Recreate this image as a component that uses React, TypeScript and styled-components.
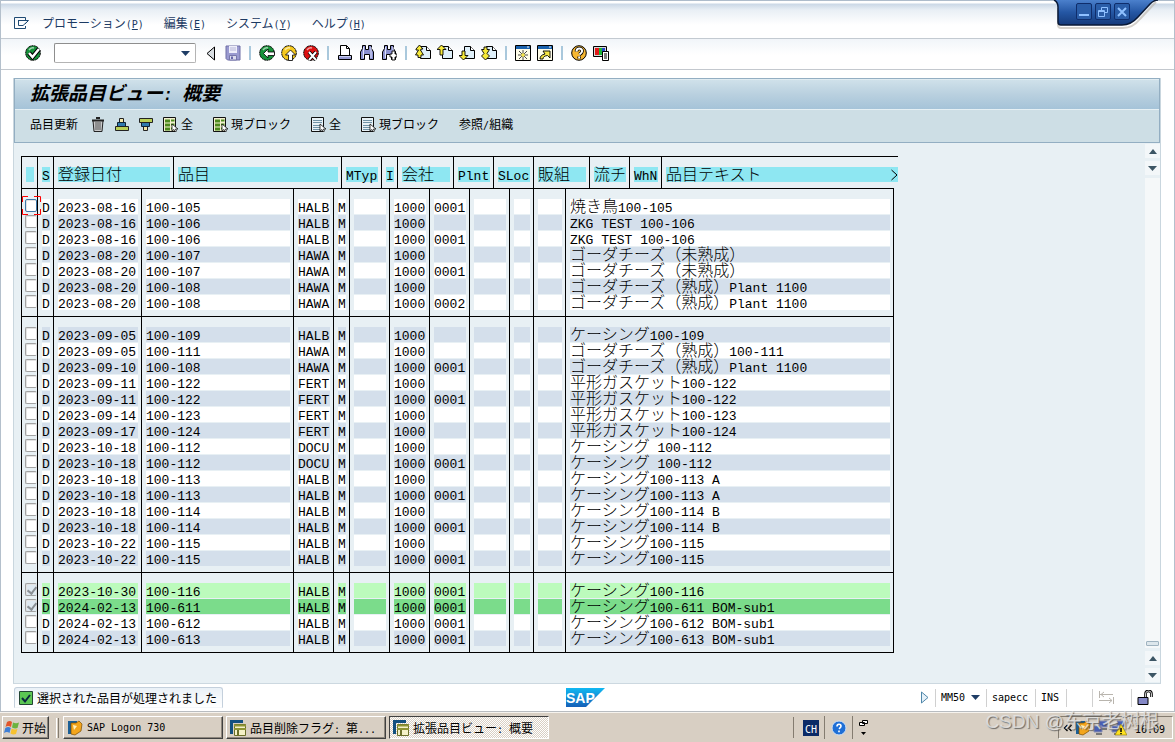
import React from 'react';
import styled, { createGlobalStyle, css } from 'styled-components';

const cjk = '"Noto Sans CJK JP", "Noto Sans CJK SC", sans-serif';
const ink = '#000';
const navy = '#1c3a63';

const GlobalStyle = createGlobalStyle`
  * { box-sizing: border-box; }
  body { margin: 0; background: #fff; color: ${ink}; font: 12px/16px ${cjk}; }
  button { appearance: none; border: 0; margin: 0; padding: 0; background: none; color: inherit; font: inherit; cursor: default; }
  svg { display: block; flex: none; }
`;

/* ---------- text with full-width and half-width runs ---------- */

const HalfWidth = styled.span<{ $large?: boolean }>`
  font-family: ${p => (p.$large ? '"Liberation Mono"' : '"DejaVu Sans Mono"')}, monospace;
  font-size: ${p => (p.$large ? 13 : 10)}px;
  line-height: 0;
  white-space: pre;
`;

function Mixed({ text, large }: { text: string; large?: boolean }) {
  const runs = text.match(/[\x20-\x7e]+|[^\x20-\x7e]+/g) || [];
  return (
    <>
      {runs.map((run, i) =>
        /^[\x20-\x7e]/.test(run) ? (
          <HalfWidth key={i} $large={large}>{run}</HalfWidth>
        ) : (
          <React.Fragment key={i}>{run}</React.Fragment>
        ),
      )}
    </>
  );
}

/* ---------- page frame ---------- */

const Screen = styled.div`
  min-height: 100vh;
  display: flex;
  flex-direction: column;
`;

const SapWindow = styled.div`
  position: relative;
  flex: 1;
  display: flex;
  flex-direction: column;
  border-left: 1px solid #b4c0cc;
  border-right: 1px solid #b4c0cc;
  border-bottom: 1px solid #b8bcc0;
  background: #fff;
`;

const MenuBar = styled.nav`
  display: flex;
  align-items: center;
  gap: 20px;
  height: 39px;
  padding: 7px 0 0 13px;
  border-top: 1px solid #aebccb;
  border-bottom: 1px solid #c3cad1;
  background: linear-gradient(#fff 0, #fff 2px, #cbd8e6 3px, #e9eff5 9px, #fff 24px);
  color: ${navy};
`;

const MenuIcon = styled.button`
  margin-right: -8px;
`;

const MenuItem = styled.button`
  white-space: nowrap;
`;

const ToolBar = styled.div`
  display: flex;
  align-items: center;
  height: 31px;
  padding: 0 0 2px 21px;
  border-bottom: 1px solid #c3c8ce;
  background: linear-gradient(#f1f5f9, #fff 16px);
`;

const ToolButton = styled.button`
  width: 22px;
  height: 22px;
  display: flex;
  align-items: center;
  justify-content: center;
`;

const ToolSeparator = styled.span`
  width: 2px;
  height: 14px;
  margin: 0 5px;
  background: #a9c8dc;
`;

const CommandField = styled.label`
  display: flex;
  align-items: center;
  width: 142px;
  height: 20px;
  margin: 0 4px 0 10px;
  padding-right: 5px;
  border: 1px solid #b4b4b4;
  border-top-color: #8e8e8e;
  border-left-color: #8e8e8e;
  border-radius: 2px;
  background: #fff;
`;

const CommandInput = styled.input`
  flex: 1;
  min-width: 0;
  height: 16px;
  border: 0;
  outline: 0;
  background: transparent;
`;

const WorkArea = styled.main`
  flex: 1;
  display: flex;
  flex-direction: column;
  margin: 8px 13px 0 12px;
  border-left: 1px solid #c9d6de;
  border-right: 1px solid #c9d6de;
  border-bottom: 1px solid #ccd8e0;
  background: #e8f0f4;
`;

const TitleBand = styled.header`
  border: 1px solid #93aec2;
  background: #cddee5;
`;

const Title = styled.h1`
  height: 31px;
  margin: 0;
  padding-left: 15px;
  border-top: 1px solid #e0ecf2;
  border-bottom: 1px solid #e6f0f4;
  background: linear-gradient(#cfe1ea, #b9d0df 50%, #a5c3d8);
  font-size: 19px;
  line-height: 24px;
  font-weight: 700;
  font-style: italic;
`;

const TitleHalf = styled.span`
  font: italic 700 16px/0 "Liberation Mono", monospace;
  white-space: pre;
`;

const AppBar = styled.div`
  display: flex;
  align-items: center;
  gap: 20px;
  height: 32px;
  padding: 0 0 4px 15px;
`;

const AppTools = styled.div`
  display: flex;
  align-items: center;
  margin: 0 -15px 0 -12px;
`;

const AppIconButton = styled.button`
  width: 24px;
  display: flex;
  justify-content: center;
`;

const AppButton = styled.button`
  display: flex;
  align-items: center;
  gap: 3px;
  white-space: nowrap;
`;

const Content = styled.div`
  flex: 1;
  display: flex;
  justify-content: space-between;
`;

/* ---------- item grid ---------- */

const Grid = styled.table`
  display: block;
  margin: 13px 0 30px 7px;
`;

const HeadGroup = styled.thead`
  display: block;
  width: 877px;
  border-top: 1px solid ${ink};
`;

const BodyGroup = styled.tbody`
  display: block;
  width: 873px;
  border-top: 1px solid ${ink};
  &:last-child { border-bottom: 1px solid ${ink}; }
`;

const cell = css`
  display: block;
  padding: 0 3px 0 4px;
  border-left: 1px solid ${ink};
  font-weight: 400;
  text-align: left;
`;

const HeadRow = styled.tr`
  display: grid;
  grid-template-columns: 16px 16px 120px 168px 40px 16px 56px 40px 40px 56px 40px 32px 237px;
`;

const HeadCell = styled.th`
  ${cell}
  padding-top: 10px;
  padding-bottom: 5px;
  &:last-child { padding-right: 0; }
`;

const BodyRow = styled.tr`
  display: grid;
  grid-template-columns: 16px 16px 88px 152px 40px 16px 40px 40px 40px 40px 24px 32px 329px;
`;

const BodyCell = styled.td`
  ${cell}
  &:last-child { border-right: 1px solid ${ink}; padding-right: 3px; }
  ${BodyRow}:first-child & { padding-top: 10px; }
  ${BodyRow}:last-child & { padding-bottom: 5px; }
`;

type Tone = 'head' | 'white' | 'blue' | 'light' | 'green';
const tones: Record<Tone, string> = {
  head: '#8ee7f2',
  white: '#ffffff',
  blue: '#d4dfeb',
  light: '#bcfbbc',
  green: '#7bdc8b',
};

const Field = styled.span<{ $tone: Tone }>`
  display: flow-root;
  height: 15px;
  margin-bottom: 1px;
  background: ${p => tones[p.$tone]};
  font-size: 16px;
  font-weight: 300;
  line-height: 12px;
  white-space: pre;
`;

const HeadField = styled(Field)`
  display: flex;
  justify-content: space-between;
`;

const CheckHolder = styled.span`
  position: relative;
  display: block;
  height: 16px;
`;

const RowCheck = styled.input`
  appearance: none;
  display: block;
  position: relative;
  width: 12px;
  height: 13px;
  margin: 0 0 0 -1px;
  border: 1px solid #a2a2a2;
  border-right-color: #dcdcdc;
  border-radius: 2px;
  background: #fff;
  box-shadow: inset 1px 1px 0 #e4e4e4;
  &:checked { background: #dfe9f1; }
  &:checked::after {
    content: '';
    position: absolute;
    left: 3px;
    top: 1px;
    width: 4px;
    height: 7px;
    border: solid #8a8f94;
    border-width: 0 2px 2px 0;
    transform: rotate(38deg);
  }
  &[data-current='true'] { border-color: #3d78a8; }
`;

const CursorFrame = styled.svg`
  position: absolute;
  left: -4px;
  top: -3px;
`;

const ScrollBar = styled.div`
  width: 15px;
  margin: 1px 0;
  display: flex;
  flex-direction: column;
  gap: 3px;
`;

const ScrollButton = styled.button`
  height: 14px;
  display: flex;
  align-items: center;
  justify-content: center;
  background: #f3f7f9;
`;

const ScrollTrack = styled.div`
  flex: 1;
  display: flex;
  flex-direction: column;
  justify-content: flex-end;
  padding-bottom: 2px;
  background: #f5f8f9;
`;

const ScrollThumb = styled.div`
  height: 5px;
  margin: 0 1px;
  border: 1px solid #9fb3c0;
  border-radius: 1px;
  background: #dde7ec;
`;

/* ---------- status line ---------- */

const StatusBar = styled.footer`
  display: grid;
  grid-template-columns: 1fr auto 1fr;
  align-items: center;
  height: 27px;
  padding: 0 18px 0 13px;
`;

const StatusMessage = styled.div`
  justify-self: start;
  display: flex;
  align-items: center;
  gap: 4px;
  height: 21px;
  padding: 0 5px 0 4px;
  border: 1px solid #c4d0dc;
  border-bottom-color: #f4f7fa;
  border-radius: 3px 3px 0 0;
  background: linear-gradient(#eaf1f7, #fff);
`;

const StatusFields = styled.div`
  justify-self: end;
  display: flex;
  align-items: center;
  height: 18px;
`;

const StatusField = styled.button<{ $width: number }>`
  display: flex;
  align-items: center;
  gap: 6px;
  height: 18px;
  width: ${p => p.$width}px;
  padding-left: 5px;
  border-left: 1px solid #d0d0d0;
`;

/* ---------- window caption buttons ---------- */

const Caption = styled.div`
  position: absolute;
  top: 0;
  right: 15px;
  width: 106px;
  height: 30px;
`;

const CaptionShape = styled.svg`
  position: absolute;
  left: 0;
  top: 0;
`;

const CaptionButtons = styled.div`
  position: relative;
  display: flex;
  gap: 3px;
  padding: 3px 0 0 23px;
`;

const CaptionButton = styled.button`
  width: 16px;
  height: 17px;
  display: flex;
  align-items: center;
  justify-content: center;
  border: 1px solid #0f2d6b;
  border-radius: 2px;
  background: #2a5da8;
`;

/* ---------- desktop task bar ---------- */

const TaskBar = styled.div`
  position: relative;
  display: flex;
  align-items: center;
  height: 30px;
  padding: 0 2px;
  border-top: 1px solid #f6f3ee;
  background: #d8cfc3;
`;

const TaskButton = styled.button<{ $pressed?: boolean }>`
  flex: 0 1 160px;
  min-width: 0;
  height: 23px;
  display: flex;
  align-items: center;
  gap: 4px;
  margin-right: 3px;
  padding: 0 3px;
  border: 1px solid;
  white-space: nowrap;
  ${p =>
    p.$pressed
      ? css`
          border-color: #404040 #fff #fff #404040;
          background: repeating-conic-gradient(#fff 0 25%, #d8cfc3 0 50%) 0 0 / 2px 2px;
        `
      : css`
          border-color: #fff #404040 #404040 #fff;
          box-shadow: inset -1px -1px 0 #8d867c;
        `}
`;

const StartButton = styled(TaskButton)`
  flex: none;
  width: 47px;
  gap: 2px;
  padding: 0 0 0 1px;
  font-family: "Noto Sans CJK SC", sans-serif;
`;

const Grip = styled.span`
  width: 3px;
  height: 20px;
  margin: 0 4px;
  border-left: 1px solid #fff;
  border-right: 1px solid #847c70;
`;

const Spacer = styled.span`
  flex: 1;
`;

const LangBar = styled.div`
  display: flex;
  align-items: center;
  gap: 5px;
  margin-right: 190px;
  border-left: 1px solid #847c70;
  padding-left: 9px;
  height: 21px;
`;

const LangMark = styled.button`
  width: 16px;
  height: 16px;
  background: #0b2a66;
  color: #fff;
  line-height: 16px;
  text-align: center;
`;

const LangSlot = styled.button`
  height: 23px;
  display: flex;
  align-items: center;
  padding-left: 6px;
  border-left: 1px solid #847c70;
`;

const Tray = styled.div`
  display: flex;
  align-items: center;
  gap: 2px;
  width: 115px;
  height: 23px;
  padding: 0 7px 0 4px;
  border: 1px solid;
  border-color: #847c70 #fff #fff #847c70;
`;

const Clock = styled.time`
  margin-left: auto;
`;

const Watermark = styled.span`
  position: absolute;
  right: 16px;
  top: -4px;
  color: rgba(232, 232, 232, 0.8);
  font: 19px/26px "Liberation Sans", "Noto Sans CJK SC", sans-serif;
  text-shadow: 1px 1px 1px rgba(80, 80, 80, 0.8);
  white-space: nowrap;
`;

/* ---------- drawings ---------- */

const Svg = ({ w = 16, h = 16, children }: { w?: number; h?: number; children: React.ReactNode }) => (
  <svg width={w} height={h} viewBox={`0 0 ${w} ${h}`} aria-hidden="true">{children}</svg>
);

const Down = ({ fill = '#1f3d66' }: { fill?: string }) => (
  <Svg w={9} h={5}><path d="M0 0h9L4.500 5z" fill={fill} /></Svg>
);
const Up = () => <Svg w={8} h={5}><path d="M0 5h8L4 0z" fill="#3c5564" /></Svg>;

const MenuGlyph = () => (
  <Svg w={16} h={13}>
    <g fill="none" stroke="#1f4a73">
      <path d="M11.500 3V.5H.5v11h11V9" />
      <path d="M4 3.500h10.500L11 7M4.500 3.500v5H9L14 4" />
    </g>
  </Svg>
);

const Ball = ({ fill, children }: { fill: string; children: React.ReactNode }) => (
  <Svg>
    <circle cx="8" cy="8" r="7.300" fill={fill} stroke="#000" strokeDasharray="2 .5" />
    <path d="M4 5q2-3 5-2" stroke="#fff" strokeOpacity=".6" strokeWidth="1.500" fill="none" />
    {children}
  </Svg>
);
const CheckBall = () => (
  <Ball fill="#16923a"><path d="M4 8l3.500 4L14 4" fill="none" stroke="#000" strokeWidth="4.500" /><path d="M4 8l3.500 4L14 4" fill="none" stroke="#fff" strokeWidth="2.500" /></Ball>
);
const BackBall = () => (
  <Ball fill="#16923a"><path d="M4.500 8.500L9 4v3h6.500v3.500H9V13z" fill="#fff" stroke="#000" strokeWidth=".8" /></Ball>
);
const ExitBall = () => (
  <Ball fill="#f5c81c"><path d="M9.500 5l5 5h-3v5.500h-4V10h-3z" fill="#fff" stroke="#000" strokeWidth=".8" /></Ball>
);
const CancelBall = () => (
  <Ball fill="#dd1111"><path d="M6 7l7 8M13 7l-7 8" stroke="#000" strokeWidth="3.500" /><path d="M6 7l7 8M13 7l-7 8" stroke="#fff" strokeWidth="2" /></Ball>
);
const HelpBall = () => (
  <Svg>
    <circle cx="8" cy="8" r="7.300" fill="#f7b731" stroke="#000" />
    <path d="M5.500 6.500q0-3 2.800-3t2.800 2.700q0 1.500-2.700 3.300M8.200 11.500v2" fill="none" stroke="#000" strokeWidth="3.600" />
    <path d="M5.500 6.500q0-3 2.800-3t2.800 2.700q0 1.500-2.700 3.300M8.200 11.500v2" fill="none" stroke="#fff" strokeWidth="2" />
  </Svg>
);
const LeftTriangle = () => (
  <Svg w={10} h={15}><path d="M8.500 1v13L1 7.500z" fill="#d9dee2" stroke="#000" /></Svg>
);
const Floppy = () => (
  <Svg>
    <path d="M1 1h14v14H2.500L1 13.500z" fill="#9a9ad0" stroke="#6f6fa6" />
    <path d="M4 1h8v7H4z" fill="#eeeefa" /><path d="M5 3h6M5 5h6" stroke="#b7b7d8" />
    <path d="M4.500 10.500h7V15h-7z" fill="#dcdcee" stroke="#77a" /><path d="M6 11.500h2V14H6z" fill="#66a" />
  </Svg>
);
const Printer = () => (
  <Svg>
    <path d="M3.500 10V.5h6l3 3V10" fill="#fff" stroke="#000" /><path d="M9.500 .5v3h3" fill="none" stroke="#000" />
    <path d="M1.500 10.500h13v4h-13z" fill="#c8cdf0" stroke="#000" strokeLinejoin="round" /><path d="M2 13h12" stroke="#6a6ab8" />
  </Svg>
);
const Binoculars = ({ next }: { next?: boolean }) => (
  <Svg>
    <path d="M3.500.5v3L1.500 7v7.500h4v-5h5v5h4V7l-2-3.500v-3h-3v4h-3v-4z" fill="#8a90d0" stroke="#000" />
    <path d="M4.500 2v11M12 2v11" stroke="#dfe2fa" />
    {next && <path d="M11 6h3v3h2v3h-2v3h-3v-3H9V9h2z" fill="#fff" stroke="#000" strokeWidth=".9" />}
  </Svg>
);
const PageArrow = ({ kind }: { kind: 'first' | 'prev' | 'next' | 'last' }) => {
  const arrow = {
    first: 'M4.500 0L8 4H6v1h-.5L8.500 10H6v2.500H3V10H.5l3-5H1V4z',
    prev: 'M4.500 0L9 4.500H6V10H3V4.500H0z',
    next: 'M3 6h3v4.500h3L4.500 15 0 10.500h3z',
    last: 'M3 2h3v2.500h2.500L6 8.500l2.500 2.500L4.500 15 .5 11 3 8.500.5 4.500H3z',
  }[kind];
  return (
    <Svg>
      <path d="M5.500 1.500h6l4 4v8h-10z" fill="#dff0fa" stroke="#000" />
      <path d="M11.500 1.500v4h4" fill="#fff" stroke="#000" />
      <path d={arrow} fill="#f7ea3a" stroke="#000" strokeWidth=".9" />
    </Svg>
  );
};
const SessionIcon = ({ link }: { link?: boolean }) => (
  <Svg>
    <path d="M.5.5h15v15H.5z" fill="#fffde9" stroke="#000" />
    <path d="M1 1h14v3H1z" fill="#1a62ae" /><path d="M12 2h2" stroke="#fff" />
    {link ? (
      <path d="M3 14q0-4 5-5L6 6h7v7l-2.500-2.500Q6 11 6 14z" fill="#f6e544" stroke="#000" strokeWidth=".9" />
    ) : (
      <path d="M8 5v10M3 10h10M4 6l8 8M12 6l-8 8" stroke="#333" strokeWidth=".9" />
    )}
    {!link && <circle cx="8" cy="10" r="1.800" fill="#f6e544" />}
  </Svg>
);
const LayoutIcon = () => (
  <Svg>
    <path d="M.5 1.500h13v10H.5z" fill="#d9d9d9" stroke="#000" />
    <path d="M2 3h4v7H2z" fill="#e01b1b" /><path d="M6 3h3v7H6z" fill="#19b53a" /><path d="M9 3h3v7H9z" fill="#2448c8" />
    <path d="M9.500 6.500h6v9h-6z" fill="#fff" stroke="#000" /><path d="M11 9h3M11 11h3M11 13h3" stroke="#000" />
  </Svg>
);
const Trash = () => (
  <Svg w={14} h={15}>
    <path d="M2 3.500h10l-1 11H3z" fill="#c9cacb" stroke="#222" /><path d="M5 5v8M7 5v8M9 5v8" stroke="#555" />
    <path d="M1 3.500h12M5 1h4" stroke="#222" strokeWidth="2" />
  </Svg>
);
const Sort = ({ down }: { down?: boolean }) => (
  <Svg w={16} h={15}>
    <g transform={down ? 'matrix(1 0 0 -1 0 15)' : undefined}>
      <path d="M5.500 1.500h4v4h-4z" fill="#f5e7a8" stroke="#222" />
      <path d="M3.500 5.500h8v4h-8z" fill="#2f79ad" stroke="#123" />
      <path d="M1.500 9.500h13v4h-13z" fill="#b9cf55" stroke="#222" />
    </g>
  </Svg>
);
const Pick = ({ on }: { on?: boolean }) => (
  <Svg w={15} h={15}>
    <path d="M.5.5h12v14H.5z" fill={on ? '#f3f0d0' : '#e7f1f6'} stroke="#111" />
    {on ? (
      <><path d="M2 2.500h5v3H2zM2 6.500h5v3H2zM2 10.500h5v3H2z" fill="#4d8a1d" /><path d="M8 3.500h3.500M8 7.500h3.500M8 11.500h3" stroke="#4d8a1d" strokeWidth="2" /></>
    ) : (
      <path d="M2 3.500h9M2 5.500h9M2 8.500h7M2 10.500h7M2 12.500h7" stroke="#6f94a8" />
    )}
    <path d="M9 7v7l2-1.500 1.500 2.500 1-1-1-2h2.500z" fill="#fff" stroke="#111" strokeWidth=".8" />
  </Svg>
);
const SapLogo = () => (
  <svg width="39" height="19" viewBox="0 0 39 19" role="img" aria-label="SAP">
    <defs>
      <linearGradient id="sapBlue" x1="0" y1="0" x2="0" y2="1">
        <stop offset="0" stopColor="#10b8f2" /><stop offset="1" stopColor="#1560b8" />
      </linearGradient>
    </defs>
    <path d="M0 0h39L20 19H0z" fill="url(#sapBlue)" />
    <text x="0" y="15" fill="#fff" fontFamily="Liberation Sans, sans-serif" fontWeight="700" fontSize="14">SAP</text>
  </svg>
);
const OkIcon = () => (
  <Svg w={14} h={14}><path d="M.5.5h13v13H.5z" fill="#5bc653" stroke="#243" /><path d="M3 7l3 3.500L11 4" fill="none" stroke="#0b2740" strokeWidth="2" /></Svg>
);
const PlayIcon = () => <Svg w={9} h={13}><path d="M1.500 1v11L8 6.500z" fill="#e4f0f8" stroke="#4f87aa" /></Svg>;
const SwapIcon = () => (
  <Svg w={17} h={13}><path d="M1.500 0v7M2 3.500h13M6 1L3 3.500 6 6M15.500 6v7M1 9.500h13M11 7l3 2.500-3 2.500" fill="none" stroke="#b9b5ae" /></Svg>
);
const LockIcon = () => (
  <Svg w={16} h={15}>
    <path d="M8.500 7V4q0-3 3-3t3 3v3" fill="none" stroke="#000" strokeWidth="2.600" /><path d="M8.500 7V4q0-3 3-3t3 3v3" fill="none" stroke="#fff" strokeWidth=".8" />
    <path d="M1 7.500h10v7H1z" fill="#8488c6" stroke="#000" />
  </Svg>
);
const WindowsFlag = () => (
  <Svg w={16} h={15}>
    <path d="M3 2q3-2 5 0L7 7Q4 5 1.500 7z" fill="#e2562b" /><path d="M9 2.500q3 1.500 6 0L13.500 8Q11 9 8 7.500z" fill="#6cb33f" />
    <path d="M1.300 8q3-2 5.500 0l-1.300 5Q3 11 0 13z" fill="#3f7fd6" /><path d="M7.700 8.500q3 1.500 5.700.5L12 14q-3 1-5.500-.5z" fill="#f7c22f" />
  </Svg>
);
const LogonIcon = () => (
  <Svg>
    <path d="M1 1h9v13H1z" fill="#1b5f96" /><path d="M4 3h5l3-2 3 3-1 7-6 4-4-1z" fill="#f3a51c" stroke="#7a4a00" strokeWidth=".7" /><path d="M6 5l4 1-3 4z" fill="#fff2c0" />
  </Svg>
);
const SapWinIcon = () => (
  <Svg>
    <path d="M0 0h13v3H3v11H0z" fill="#12507f" /><path d="M4.500 4.500h11v11h-11z" fill="#f4f1c8" stroke="#6b6f2a" />
    <path d="M4 5.500h12M4 9h12" stroke="#8d9433" strokeWidth="2" /><path d="M8 10v5" stroke="#6b6f2a" strokeWidth="2" />
  </Svg>
);
const InfoBall = () => (
  <Svg><circle cx="8" cy="8" r="7" fill="#1f6fd6" stroke="#cfe1f6" /><path d="M6 6.500q0-2.300 2-2.300t2 2q0 1-2 2.600M8 10.500v1.700" fill="none" stroke="#fff" strokeWidth="1.600" /></Svg>
);
const LangOptions = () => (
  <Svg w={9} h={18}><path d="M3.500 1.500h5v3h-5zM.5 3.500h5v3h-5z" fill="#fff" stroke="#000" /><path d="M2 13h5l-2.500 3z" /></Svg>
);
const NetIcon = ({ warn }: { warn?: boolean }) => (
  <Svg>
    <path d="M6 1h8v6H6zM1 6h8v6H1z" fill="#4a5fb4" stroke="#8a90b0" /><path d="M3 14h6M9 9h5" stroke="#777" strokeWidth="2" />
    {warn && <><path d="M10 4l6 11H4z" fill="#ffe21f" stroke="#8a7300" strokeWidth=".6" /><path d="M10 8v4M10 13v1.300" stroke="#000" strokeWidth="1.500" /></>}
  </Svg>
);
const Chevrons = () => <Svg w={10} h={8}><path d="M4.500 1L1.500 4l3 3M8.500 1l-3 3 3 3" fill="none" stroke="#000" strokeWidth="1.300" /></Svg>;

/* ---------- data ---------- */

const menus = [['プロモーション', 'P'], ['編集', 'E'], ['システム', 'Y'], ['ヘルプ', 'H']];

const columns = ['', 'S', '登録日付', '品目', 'MTyp', 'I', '会社', 'Plnt', 'SLoc', '販組', '流チ', 'WhN', '品目テキスト'];

type Item = [date: string, material: string, type: string, sloc: string, text: string, selected?: boolean];
const gouda = 'ゴーダチーズ（熟成）';
const blocks: Item[][] = [
  [
    ['2023-08-16', '100-105', 'HALB', '0001', '焼き鳥100-105'],
    ['2023-08-16', '100-106', 'HALB', '', 'ZKG TEST 100-106'],
    ['2023-08-16', '100-106', 'HALB', '0001', 'ZKG TEST 100-106'],
    ['2023-08-20', '100-107', 'HAWA', '', 'ゴーダチーズ（未熟成）'],
    ['2023-08-20', '100-107', 'HAWA', '0001', 'ゴーダチーズ（未熟成）'],
    ['2023-08-20', '100-108', 'HAWA', '', gouda + 'Plant 1100'],
    ['2023-08-20', '100-108', 'HAWA', '0002', gouda + 'Plant 1100'],
  ],
  [
    ['2023-09-05', '100-109', 'HALB', '', 'ケーシング100-109'],
    ['2023-09-05', '100-111', 'HAWA', '', gouda + '100-111'],
    ['2023-09-10', '100-108', 'HAWA', '0001', gouda + 'Plant 1100'],
    ['2023-09-11', '100-122', 'FERT', '', '平形ガスケット100-122'],
    ['2023-09-11', '100-122', 'FERT', '0001', '平形ガスケット100-122'],
    ['2023-09-14', '100-123', 'FERT', '', '平形ガスケット100-123'],
    ['2023-09-17', '100-124', 'FERT', '', '平形ガスケット100-124'],
    ['2023-10-18', '100-112', 'DOCU', '', 'ケーシング 100-112'],
    ['2023-10-18', '100-112', 'DOCU', '0001', 'ケーシング 100-112'],
    ['2023-10-18', '100-113', 'HALB', '', 'ケーシング100-113 A'],
    ['2023-10-18', '100-113', 'HALB', '0001', 'ケーシング100-113 A'],
    ['2023-10-18', '100-114', 'HALB', '', 'ケーシング100-114 B'],
    ['2023-10-18', '100-114', 'HALB', '0001', 'ケーシング100-114 B'],
    ['2023-10-22', '100-115', 'HALB', '', 'ケーシング100-115'],
    ['2023-10-22', '100-115', 'HALB', '0001', 'ケーシング100-115'],
  ],
  [
    ['2023-10-30', '100-116', 'HALB', '0001', 'ケーシング100-116', true],
    ['2024-02-13', '100-611', 'HALB', '0001', 'ケーシング100-611 BOM-sub1', true],
    ['2024-02-13', '100-612', 'HALB', '0001', 'ケーシング100-612 BOM-sub1'],
    ['2024-02-13', '100-613', 'HALB', '0001', 'ケーシング100-613 BOM-sub1'],
  ],
];

function ItemRow({ item, index, current }: { item: Item; index: number; current: boolean }) {
  const [date, material, type, sloc, text, selected] = item;
  const odd = index % 2 === 1;
  const tone: Tone = selected ? (odd ? 'green' : 'light') : odd ? 'blue' : 'white';
  const values = ['D', date, material, type, 'M', '', '1000', sloc, '', '', '', text];
  return (
    <BodyRow>
      <BodyCell>
        <CheckHolder>
          <RowCheck type="checkbox" aria-label={`${material} ${date}`} defaultChecked={selected} data-current={current} />
          {current && (
            <CursorFrame width="19" height="20" viewBox="0 0 19 20" aria-hidden="true">
              <path d="M.5 6V.5H6M12 .5h6.500V6M.5 13v5.500H6M12 18.500h6.500V13" fill="none" stroke="#f00" />
            </CursorFrame>
          )}
        </CheckHolder>
      </BodyCell>
      {values.map((value, i) => (
        <BodyCell key={i}><Field $tone={tone}><Mixed text={value} large /></Field></BodyCell>
      ))}
    </BodyRow>
  );
}

export default function App() {
  let index = -1;
  return (
    <Screen>
      <GlobalStyle />
      <SapWindow>
        <MenuBar>
          <MenuIcon aria-label="メニュー"><MenuGlyph /></MenuIcon>
          {menus.map(([label, key]) => (
            <MenuItem key={key}>{label}<HalfWidth>(<u>{key}</u>)</HalfWidth></MenuItem>
          ))}
        </MenuBar>
        <Caption>
          <CaptionShape width="106" height="30" viewBox="0 0 106 30" aria-hidden="true">
            <defs>
              <linearGradient id="captionBlue" x1="0" y1="0" x2="0" y2="1">
                <stop offset="0" stopColor="#4b80cc" /><stop offset=".5" stopColor="#2456a3" /><stop offset="1" stopColor="#153a7a" />
              </linearGradient>
            </defs>
            <path d="M5 8v17q0 3 3 3h62q10 0 17-9L103 2" fill="none" stroke="#b9b2a8" strokeWidth="2" opacity=".6" />
            <path d="M1 0q4 2 4 7v15q0 3 3 3h61q9 0 16-8L97 4q4-4 8-4z" fill="url(#captionBlue)" />
            <path d="M1 0q4 2 4 7v15q0 3 3 3h61q9 0 16-8L97 4q4-4 8-4" fill="none" stroke="#0a1a38" strokeWidth="1.500" />
          </CaptionShape>
          <CaptionButtons>
            <CaptionButton aria-label="最小化"><Svg w={10} h={10}><path d="M0 8h10" stroke="#8fc0ff" strokeWidth="2" /></Svg></CaptionButton>
            <CaptionButton aria-label="元に戻す"><Svg w={10} h={10}><path d="M3.500 3V.5h6v5H7M.5 3.500h6v6h-6zM.5 4.500h6" fill="none" stroke="#8fc0ff" /></Svg></CaptionButton>
            <CaptionButton aria-label="閉じる"><Svg w={10} h={10}><path d="M1 1l8 8M9 1L1 9" stroke="#8fc0ff" strokeWidth="2" /></Svg></CaptionButton>
          </CaptionButtons>
        </Caption>
        <ToolBar>
          <ToolButton aria-label="続行"><CheckBall /></ToolButton>
          <CommandField><CommandInput type="text" aria-label="コマンド" /><Down /></CommandField>
          <ToolButton aria-label="閉じる"><LeftTriangle /></ToolButton>
          <ToolButton aria-label="保存"><Floppy /></ToolButton>
          <ToolSeparator />
          <ToolButton aria-label="戻る"><BackBall /></ToolButton>
          <ToolButton aria-label="終了"><ExitBall /></ToolButton>
          <ToolButton aria-label="取消"><CancelBall /></ToolButton>
          <ToolSeparator />
          <ToolButton aria-label="印刷"><Printer /></ToolButton>
          <ToolButton aria-label="検索"><Binoculars /></ToolButton>
          <ToolButton aria-label="次検索"><Binoculars next /></ToolButton>
          <ToolSeparator />
          <ToolButton aria-label="先頭頁"><PageArrow kind="first" /></ToolButton>
          <ToolButton aria-label="前頁"><PageArrow kind="prev" /></ToolButton>
          <ToolButton aria-label="次頁"><PageArrow kind="next" /></ToolButton>
          <ToolButton aria-label="最終頁"><PageArrow kind="last" /></ToolButton>
          <ToolSeparator />
          <ToolButton aria-label="新規セッション"><SessionIcon /></ToolButton>
          <ToolButton aria-label="ショートカット"><SessionIcon link /></ToolButton>
          <ToolSeparator />
          <ToolButton aria-label="ヘルプ"><HelpBall /></ToolButton>
          <ToolButton aria-label="レイアウト"><LayoutIcon /></ToolButton>
        </ToolBar>

        <WorkArea>
          <TitleBand>
            <Title>拡張品目ビュー<TitleHalf>: </TitleHalf>概要</Title>
            <AppBar>
              <AppButton>品目更新</AppButton>
              <AppTools>
                <AppIconButton aria-label="削除"><Trash /></AppIconButton>
                <AppIconButton aria-label="昇順"><Sort /></AppIconButton>
                <AppIconButton aria-label="降順"><Sort down /></AppIconButton>
              </AppTools>
              <AppButton><Pick on />全</AppButton>
              <AppButton><Pick on />現ブロック</AppButton>
              <AppButton><Pick />全</AppButton>
              <AppButton><Pick />現ブロック</AppButton>
              <AppButton><span>参照<HalfWidth>/</HalfWidth>組織</span></AppButton>
            </AppBar>
          </TitleBand>
          <Content>
            <Grid>
              <HeadGroup>
                <HeadRow>
                  {columns.map((name, i) => (
                    <HeadCell key={i} scope="col">
                      <HeadField $tone="head">
                        <span><Mixed text={name} large /></span>
                        {i === columns.length - 1 && <Svg w={8} h={15}><path d="M1.500 3L7 8l-5.500 5" fill="none" stroke="#000" /></Svg>}
                      </HeadField>
                    </HeadCell>
                  ))}
                </HeadRow>
              </HeadGroup>
              {blocks.map((block, b) => (
                <BodyGroup key={b}>
                  {block.map(item => {
                    index += 1;
                    return <ItemRow key={index} item={item} index={index} current={index === 0} />;
                  })}
                </BodyGroup>
              ))}
            </Grid>
            <ScrollBar>
              <ScrollButton aria-label="上へ"><Up /></ScrollButton>
              <ScrollButton aria-label="下へ"><Down fill="#3c5564" /></ScrollButton>
              <ScrollTrack><ScrollThumb /></ScrollTrack>
              <ScrollButton aria-label="前へ"><Up /></ScrollButton>
              <ScrollButton aria-label="次へ"><Down fill="#3c5564" /></ScrollButton>
            </ScrollBar>
          </Content>
        </WorkArea>

        <StatusBar>
          <StatusMessage role="status"><OkIcon />選択された品目が処理されました</StatusMessage>
          <SapLogo />
          <StatusFields>
            <ToolButton aria-label="展開"><PlayIcon /></ToolButton>
            <StatusField $width={51}><HalfWidth>MM50</HalfWidth><Down /></StatusField>
            <StatusField $width={49}><HalfWidth>sapecc</HalfWidth></StatusField>
            <StatusField $width={31}><HalfWidth>INS</HalfWidth></StatusField>
            <StatusField $width={26} aria-label="空き" />
            <StatusField $width={39} aria-label="転送"><SwapIcon /></StatusField>
            <StatusField $width={25} aria-label="ロック"><LockIcon /></StatusField>
          </StatusFields>
        </StatusBar>
      </SapWindow>

      <TaskBar>
        <StartButton><WindowsFlag />开始</StartButton>
        <Grip />
        <TaskButton><LogonIcon /><HalfWidth>SAP Logon 730</HalfWidth></TaskButton>
        <TaskButton><SapWinIcon /><span><Mixed text="品目削除フラグ: 第..." /></span></TaskButton>
        <TaskButton $pressed><SapWinIcon /><span><Mixed text="拡張品目ビュー: 概要" /></span></TaskButton>
        <Spacer />
        <LangBar>
          <LangMark><HalfWidth>CH</HalfWidth></LangMark>
          <LangSlot aria-label="ヘルプ"><InfoBall /></LangSlot>
          <LangSlot aria-label="オプション"><LangOptions /></LangSlot>
        </LangBar>
        <Tray>
          <Chevrons /><LogonIcon /><NetIcon /><NetIcon warn />
          <Clock><HalfWidth>16:09</HalfWidth></Clock>
        </Tray>
        <Watermark>CSDN @东京老树根</Watermark>
      </TaskBar>
    </Screen>
  );
}
